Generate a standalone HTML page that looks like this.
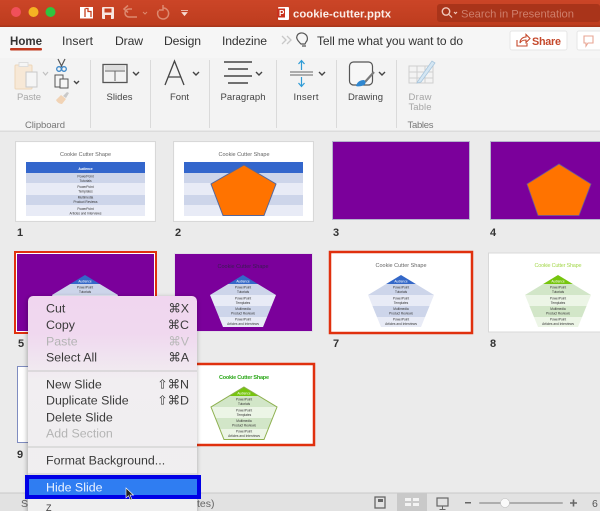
<!DOCTYPE html>
<html><head><meta charset="utf-8"><title>cookie-cutter.pptx</title>
<style>
html,body{margin:0;padding:0;background:#ebebeb;width:600px;height:511px;overflow:hidden}
svg{display:block;font-family:"Liberation Sans",sans-serif;filter:blur(.35px)}
.t{font-size:12.2px;fill:#333}
.l{font-size:9.5px;fill:#444;text-anchor:middle}
.n{font-size:11px;font-weight:bold;fill:#333}
.st{font-size:5.5px;fill:#666;text-anchor:middle}
.tiny{font-size:3.2px;fill:#333;text-anchor:middle}
.m{font-size:12.4px;fill:#3a3a3a}
.d{font-size:12.4px;fill:#b4b4b4}
.s{font-size:12.4px;fill:#3a3a3a;text-anchor:end}
.ds{font-size:12.4px;fill:#b8b8b8;text-anchor:end}
</style></head><body>
<svg width="600" height="511" viewBox="0 0 600 511" xmlns="http://www.w3.org/2000/svg">
<defs>
<linearGradient id="tb" x1="0" y1="0" x2="0" y2="1"><stop offset="0" stop-color="#cb4527"/><stop offset="1" stop-color="#bd3c1e"/></linearGradient>
<linearGradient id="mg" x1="0" y1="0" x2="0" y2="1"><stop offset="0" stop-color="#f0d6ef"/><stop offset=".17" stop-color="#f0d8ef"/><stop offset=".38" stop-color="#f1eef1"/><stop offset="1" stop-color="#efefef"/></linearGradient>
<clipPath id="pc"><polygon points="0,0 33,20 20,52 -20,52 -33,20"/></clipPath>
<filter id="sh" x="-10%" y="-10%" width="120%" height="120%"><feGaussianBlur stdDeviation="2.5"/></filter>
<g id="pb">
<g clip-path="url(#pc)">
<rect x="-34" y="0" width="68" height="9" fill="#3468c8"/>
<rect x="-34" y="9" width="68" height="11" fill="#cdd5ea"/>
<rect x="-34" y="20" width="68" height="11" fill="#e8ebf6"/>
<rect x="-34" y="31" width="68" height="11" fill="#cdd5ea"/>
<rect x="-34" y="42" width="68" height="10" fill="#e8ebf6"/>
</g>
<text class="tiny" y="7.5" style="fill:#fff">Audience</text>
<text class="tiny" y="13.5">PowerPoint</text><text class="tiny" y="18">Tutorials</text>
<text class="tiny" y="24.5">PowerPoint</text><text class="tiny" y="29">Templates</text>
<text class="tiny" y="35">Multimedia</text><text class="tiny" y="39.5">Product Reviews</text>
<text class="tiny" y="45.5">PowerPoint</text><text class="tiny" y="50">Articles and Interviews</text>
</g>
<g id="pg">
<g clip-path="url(#pc)">
<rect x="-34" y="0" width="68" height="9" fill="#76c50e"/>
<rect x="-34" y="9" width="68" height="11" fill="#d2e6c8"/>
<rect x="-34" y="20" width="68" height="11" fill="#ecf5e6"/>
<rect x="-34" y="31" width="68" height="11" fill="#d2e6c8"/>
<rect x="-34" y="42" width="68" height="10" fill="#ecf5e6"/>
</g>
<text class="tiny" y="7.5" style="fill:#fff">Audience</text>
<text class="tiny" y="13.5">PowerPoint</text><text class="tiny" y="18">Tutorials</text>
<text class="tiny" y="24.5">PowerPoint</text><text class="tiny" y="29">Templates</text>
<text class="tiny" y="35">Multimedia</text><text class="tiny" y="39.5">Product Reviews</text>
<text class="tiny" y="45.5">PowerPoint</text><text class="tiny" y="50">Articles and Interviews</text>
</g>
<g id="tbl">
<rect x="0" y="0" width="119" height="11" fill="#3366cc"/>
<rect x="0" y="11" width="119" height="10" fill="#cdd5ea"/>
<rect x="0" y="21" width="119" height="12" fill="#e8ebf6"/>
<rect x="0" y="33" width="119" height="10" fill="#cdd5ea"/>
<rect x="0" y="43" width="119" height="11" fill="#e8ebf6"/>
</g>
</defs>

<rect width="600" height="511" fill="#ebebeb"/>

<!-- title bar -->
<rect width="600" height="26" fill="url(#tb)"/>
<rect y="25.5" width="600" height="1.5" fill="#a8361b"/>
<circle cx="16" cy="12" r="5" fill="#f0505a"/>
<circle cx="33.5" cy="12" r="5" fill="#f5b323"/>
<circle cx="50.5" cy="12" r="5" fill="#2fc53f"/>
<rect x="80" y="7" width="13" height="11.5" fill="#fff"/>
<path d="M85 8.5V17M85.500 8.500h2.500v3h3v5.500" fill="none" stroke="#c5401f" stroke-width="1.300"/>
<rect x="102" y="7" width="12" height="12" rx="1" fill="#f7e6e0"/>
<rect x="104.500" y="8.500" width="7" height="4" fill="#c5401f"/>
<rect x="105" y="15" width="6" height="4" fill="#c5401f"/>
<path d="M137 17h-8a4 4 0 0 1 0-8h3M128 5.500l-4 3.500 4 3.500" fill="none" stroke="#dd8a70" stroke-width="1.500"/>
<path d="M143 12l2 2 2-2" fill="none" stroke="#dd8a70" stroke-width="1"/>
<path d="M163 8a5.500 5.500 0 1 1-4.500 2.500M163 5v5h-4" fill="none" stroke="#dd8a70" stroke-width="1.500"/>
<path d="M181 10.500h7M182 12.500h5l-2.500 3z" fill="#f7dcd2" stroke="#f7dcd2" stroke-width=".8"/>
<rect x="278" y="7" width="11" height="13" rx="1" fill="#fff"/>
<rect x="277" y="8.500" width="8" height="9" fill="#c9301c"/>
<text x="279" y="16" style="font-size:8px;font-weight:bold;fill:#fff">P</text>
<text x="293" y="17.500" style="font-size:11.300px;font-weight:bold;fill:#fbeee9" textLength="98">cookie-cutter.pptx</text>
<rect x="437" y="4" width="163" height="18" rx="3" fill="#a9341a"/>
<circle cx="446" cy="11.500" r="3.700" fill="none" stroke="#f0c8bb" stroke-width="1.400"/>
<path d="M449 14.500l3 3M454 12l1.500 1.500 1.500-1.500" fill="none" stroke="#f0c8bb" stroke-width="1.200"/>
<text x="461" y="17.500" style="font-size:11.200px;fill:#cf7f6c" textLength="113">Search in Presentation</text>

<!-- ribbon -->
<rect y="27" width="600" height="32" fill="#f6f6f6"/>
<rect y="58" width="600" height="73" fill="#f3f3f3"/>
<rect y="130.500" width="600" height="1.500" fill="#dcdcdc"/>
<text x="10" y="45" style="font-size:11.500px;font-weight:bold;fill:#333" textLength="32">Home</text>
<rect x="10" y="48" width="32" height="2.500" rx="1" fill="#c0391f"/>
<text x="62" y="45" class="t" textLength="31">Insert</text>
<text x="115" y="45" class="t" textLength="28">Draw</text>
<text x="164" y="45" class="t" textLength="37">Design</text>
<text x="222" y="45" class="t" textLength="45">Indezine</text>
<path d="M282 36l4 4-4 4M287 36l4 4-4 4" fill="none" stroke="#c8c8c8" stroke-width="1.300"/>
<path d="M300 43c-3-3-4-5-3-7 1-3 5-4 8-2s3 6 1 8l-1 2h-4zM302 46h4" fill="none" stroke="#555" stroke-width="1.200"/>
<text x="317" y="45" style="font-size:12px;fill:#333" textLength="146">Tell me what you want to do</text>
<rect x="510" y="31" width="57" height="19" rx="2" fill="#fff" stroke="#e6e6e6"/>
<path d="M517 40v6h10v-3M520 43c0-4 3-6 6-6v-2.500l4 4-4 4V40c-3 0-5 1-6 3z" fill="none" stroke="#c5492c" stroke-width="1.100"/>
<text x="532" y="45" style="font-size:10.800px;font-weight:bold;fill:#c5492c" textLength="29">Share</text>
<rect x="577" y="31" width="30" height="19" rx="2" fill="#fff" stroke="#e6e6e6"/>
<path d="M584 36h9v7h-5l-2 3v-3h-2z" fill="none" stroke="#e8a593" stroke-width="1.100"/>

<g stroke="#dadada" stroke-width="1">
<path d="M90.500 60v68M150.500 60v68M209.500 60v68M276.500 60v68M336.500 60v68M396.500 60v68"/>
</g>

<!-- clipboard -->
<rect x="15" y="65" width="17" height="24" rx="1" fill="#f7e8d6" stroke="#edd6b8"/>
<rect x="19" y="62.500" width="9" height="4" fill="#f5f5f5" stroke="#ddd"/>
<rect x="26" y="72" width="11" height="15" fill="#f5f5f5" stroke="#c8c8c8"/>
<path d="M43 72l2.500 3 2.500-3" fill="none" stroke="#c0c0c0" stroke-width="1.200"/>
<text x="29" y="100" class="l" style="fill:#a8a8a8" textLength="24">Paste</text>
<path d="M58 59l4 8M65 59l-4 8" stroke="#555" stroke-width="1.200" fill="none"/>
<circle cx="59" cy="69" r="2.300" fill="none" stroke="#3a86c8" stroke-width="1.300"/>
<circle cx="64" cy="69" r="2.300" fill="none" stroke="#3a86c8" stroke-width="1.300"/>
<rect x="55" y="75" width="8" height="12" fill="#f5f5f5" stroke="#555"/>
<rect x="60" y="79" width="8" height="9" fill="#f5f5f5" stroke="#555"/>
<path d="M74 81l2.500 2.500L79 81" fill="none" stroke="#444" stroke-width="1.400"/>
<path d="M56 100l5-5 5 4-4 5c-3 0-5-2-6-4z" fill="#f1d3b5"/>
<path d="M63 96l4-4 2 1-3 5z" fill="#c9c9c9"/>
<text x="45" y="128" class="l" style="fill:#777" textLength="40">Clipboard</text>

<!-- slides -->
<rect x="103" y="64.500" width="24" height="18" fill="#f3f3f3" stroke="#555" stroke-width="1.300"/>
<path d="M105 71h20M115 71v10" stroke="#666" stroke-width="1" fill="none"/>
<rect x="105" y="66" width="20" height="4" fill="#ddd"/>
<path d="M133 72l3 3 3-3" fill="none" stroke="#444" stroke-width="1.400"/>
<text x="119.500" y="100" class="l" textLength="26">Slides</text>

<!-- font -->
<path d="M165 85l9.500-24 9.500 24M168.500 77h12" fill="none" stroke="#444" stroke-width="1.300"/>
<path d="M193 72l3 3 3-3" fill="none" stroke="#444" stroke-width="1.400"/>
<text x="179.500" y="100" class="l" textLength="19">Font</text>

<!-- paragraph -->
<path d="M224 62h28M228 69h20M224 76h28M228 83h20" stroke="#444" stroke-width="1.600" fill="none"/>
<path d="M256 72l3 3 3-3" fill="none" stroke="#444" stroke-width="1.400"/>
<text x="243" y="100" class="l" textLength="45">Paragraph</text>

<!-- insert -->
<path d="M290 72h23M290 75h23" stroke="#666" stroke-width="1.100" fill="none"/>
<path d="M301.500 61v9M298.500 64l3-3.500 3 3.500M301.500 86v-9M298.500 83l3 3.500 3-3.500" stroke="#2e9bd6" stroke-width="1.200" fill="none"/>
<path d="M319 72l3 3 3-3" fill="none" stroke="#444" stroke-width="1.400"/>
<text x="306" y="100" class="l" textLength="25">Insert</text>

<!-- drawing -->
<rect x="349.500" y="62" width="23" height="23" rx="4" fill="#f7f7f7" stroke="#555" stroke-width="1.200"/>
<path d="M374 72l-9 10" stroke="#7a7a7a" stroke-width="2.200"/>
<path d="M356 86c1-4 4-6 8-6 2 1 2 4 0 5-2 1-5 2-8 1z" fill="#2f87d0"/>
<path d="M379 72l3 3 3-3" fill="none" stroke="#444" stroke-width="1.400"/>
<text x="365.500" y="100" class="l" textLength="35">Drawing</text>

<!-- draw table -->
<path d="M409 66h24v17h-24zM409 72h24M409 78h24M417 66v17M425 66v17" fill="none" stroke="#cfcfcf" stroke-width="1"/>
<path d="M418 81l14-20 3 2-14 19-4 1z" fill="#d4e6f3" stroke="#a8c6dd" stroke-width=".8"/>
<text x="420" y="100" class="l" style="fill:#a5a5a5" textLength="23">Draw</text>
<text x="420" y="110" class="l" style="fill:#a5a5a5" textLength="23">Table</text>
<text x="420.500" y="128" class="l" style="fill:#777" textLength="26">Tables</text>

<!-- row 1 -->
<rect x="15.500" y="141.500" width="140" height="80" fill="#f8f8f8" stroke="#d8d8d8"/>
<rect x="16.500" y="142.500" width="138" height="78" fill="#fff"/>
<text x="85.500" y="156" class="st" textLength="51">Cookie Cutter Shape</text>
<use href="#tbl" x="26" y="162"/>
<text x="85.500" y="170" class="tiny" style="fill:#fff;font-weight:bold">Audience</text>
<text x="85.500" y="177.500" class="tiny">PowerPoint</text><text x="85.500" y="182" class="tiny">Tutorials</text>
<text x="85.500" y="188" class="tiny">PowerPoint</text><text x="85.500" y="192.500" class="tiny">Templates</text>
<text x="85.500" y="198.500" class="tiny">Multimedia</text><text x="85.500" y="203" class="tiny">Product Reviews</text>
<text x="85.500" y="210" class="tiny">PowerPoint</text><text x="85.500" y="214.500" class="tiny">Articles and Interviews</text>
<text x="17" y="236" class="n">1</text>

<rect x="173.500" y="141.500" width="140" height="80" fill="#f8f8f8" stroke="#d8d8d8"/>
<rect x="174.500" y="142.500" width="138" height="78" fill="#fff"/>
<text x="244" y="156" class="st" textLength="51">Cookie Cutter Shape</text>
<use href="#tbl" x="184" y="162"/>
<polygon points="244,165 276,184 264,215.500 223,215.500 211,184" fill="#ff7300" stroke="#56679a" stroke-width="1"/>
<text x="175" y="236" class="n">2</text>

<rect x="332.500" y="141.500" width="137" height="78" fill="#7b009b" stroke="#b5b5cc"/>
<text x="333" y="236" class="n">3</text>

<rect x="490.500" y="141.500" width="112" height="78" fill="#7b009b" stroke="#b5b5cc"/>
<polygon points="559,164 591,184 579,215.500 538,215.500 527,184" fill="#ff7300" stroke="#6b5a9a" stroke-width=".8"/>
<text x="490" y="236" class="n">4</text>

<!-- row 2 -->
<rect x="15" y="252" width="141" height="81" fill="#fff" stroke="#e0300e" stroke-width="2"/>
<rect x="17" y="254" width="137" height="77" fill="#7b009b"/>
<use href="#pb" x="85" y="275"/>
<text x="18" y="347" class="n">5</text>

<rect x="174.500" y="253.500" width="138" height="78" fill="#7b009b" stroke="#e2dfe6"/>
<text x="243" y="268" class="st" style="fill:#3a1a52" textLength="51">Cookie Cutter Shape</text>
<use href="#pb" x="243" y="275"/>

<rect x="330" y="252" width="142" height="81" fill="#fff" stroke="#e0300e" stroke-width="2.500"/>
<text x="401" y="267" class="st" textLength="51">Cookie Cutter Shape</text>
<use href="#pb" x="401" y="275"/>
<text x="333" y="347" class="n">7</text>

<rect x="488.500" y="253" width="120" height="79" fill="#fff" stroke="#d8d8d8"/>
<text x="558" y="267" class="st" style="fill:#a5d84e" textLength="47">Cookie Cutter Shape</text>
<use href="#pg" x="558" y="275"/>
<text x="490" y="347" class="n">8</text>

<!-- row 3 -->
<rect x="17.500" y="366.500" width="100" height="76" fill="#fff" stroke="#7f8cc0"/>
<text x="17" y="458" class="n">9</text>

<rect x="172" y="364" width="142" height="81" fill="#fff" stroke="#e0300e" stroke-width="2.500"/>
<text x="244" y="379" style="font-size:5.500px;font-weight:bold;fill:#2ca81a;text-anchor:middle" textLength="50">Cookie Cutter Shape</text>
<use href="#pg" x="244" y="387"/>
<polygon points="244,387 277,407 264,439.500 224,439.500 211,407" fill="none" stroke="#8db04e" stroke-width="1"/>

<!-- status bar -->
<rect y="493" width="600" height="18" fill="#e2e2e2"/>
<rect y="492.500" width="600" height="1" fill="#c8c8c8"/>
<text x="21" y="507" style="font-size:10.500px;fill:#666">S</text>
<text x="197" y="507" style="font-size:10.500px;fill:#666">tes)</text>
<rect x="375" y="497" width="10" height="11" fill="none" stroke="#666" stroke-width="1.300"/>
<rect x="378" y="499" width="5" height="3" fill="#666"/>
<rect x="397" y="493" width="30" height="18" fill="#c9c9c9"/>
<rect x="405" y="498" width="6" height="3" fill="#f3f3f3"/><rect x="413" y="498" width="6" height="3" fill="#f3f3f3"/>
<rect x="405" y="503" width="6" height="3" fill="#f3f3f3"/><rect x="413" y="503" width="6" height="3" fill="#f3f3f3"/>
<rect x="437" y="498" width="11" height="8" fill="none" stroke="#666" stroke-width="1.200"/>
<path d="M442.500 506v3M439.500 509.500h6" stroke="#666" stroke-width="1"/>
<rect x="465" y="502" width="6" height="1.500" fill="#666"/>
<rect x="479" y="502" width="84" height="2" rx="1" fill="#adadad"/>
<circle cx="505" cy="503" r="4.500" fill="#fafafa" stroke="#c0c0c0" stroke-width=".6"/>
<path d="M570 503h7M573.500 499.500v7" stroke="#666" stroke-width="1.600"/>
<text x="592" y="507" style="font-size:10.500px;fill:#555">6</text>

<!-- context menu -->
<rect x="27" y="297" width="170" height="222" rx="5" fill="#000" opacity=".28" filter="url(#sh)"/>
<rect x="28" y="296" width="169" height="220" rx="5" fill="url(#mg)"/>
<text x="46" y="312.500" class="m">Cut</text><text x="189" y="312.500" class="s">⌘X</text>
<text x="46" y="329" class="m">Copy</text><text x="189" y="329" class="s">⌘C</text>
<text x="46" y="345.500" class="d">Paste</text><text x="189" y="345.500" class="ds">⌘V</text>
<text x="46" y="361.500" class="m">Select All</text><text x="189" y="361.500" class="s">⌘A</text>
<rect x="28" y="370" width="169" height="2" fill="#dcd9dc"/>
<text x="46" y="388.500" class="m">New Slide</text><text x="189" y="388.500" class="s">⇧⌘N</text>
<text x="46" y="404.500" class="m">Duplicate Slide</text><text x="189" y="404.500" class="s">⇧⌘D</text>
<text x="46" y="421.500" class="m">Delete Slide</text>
<text x="46" y="437.500" class="d">Add Section</text>
<rect x="28" y="446" width="169" height="2" fill="#dcdcdc"/>
<text x="46" y="464.500" class="m">Format Background...</text>
<rect x="28" y="473" width="169" height="2" fill="#dcdcdc"/>
<text x="46" y="511" class="m" style="font-size:9px">Z</text>

<rect x="27" y="477" width="172" height="20" fill="#2f7df2" stroke="#0000e6" stroke-width="4"/>
<text x="46" y="491.500" style="font-size:12.400px;fill:#eaf2ff">Hide Slide</text>
<path d="M126 488v10l2.500-2.300 2 4.300 1.500-.7-2-4.200h3.500z" fill="#222" stroke="#fff" stroke-width=".6"/>
</svg>
</body></html>
